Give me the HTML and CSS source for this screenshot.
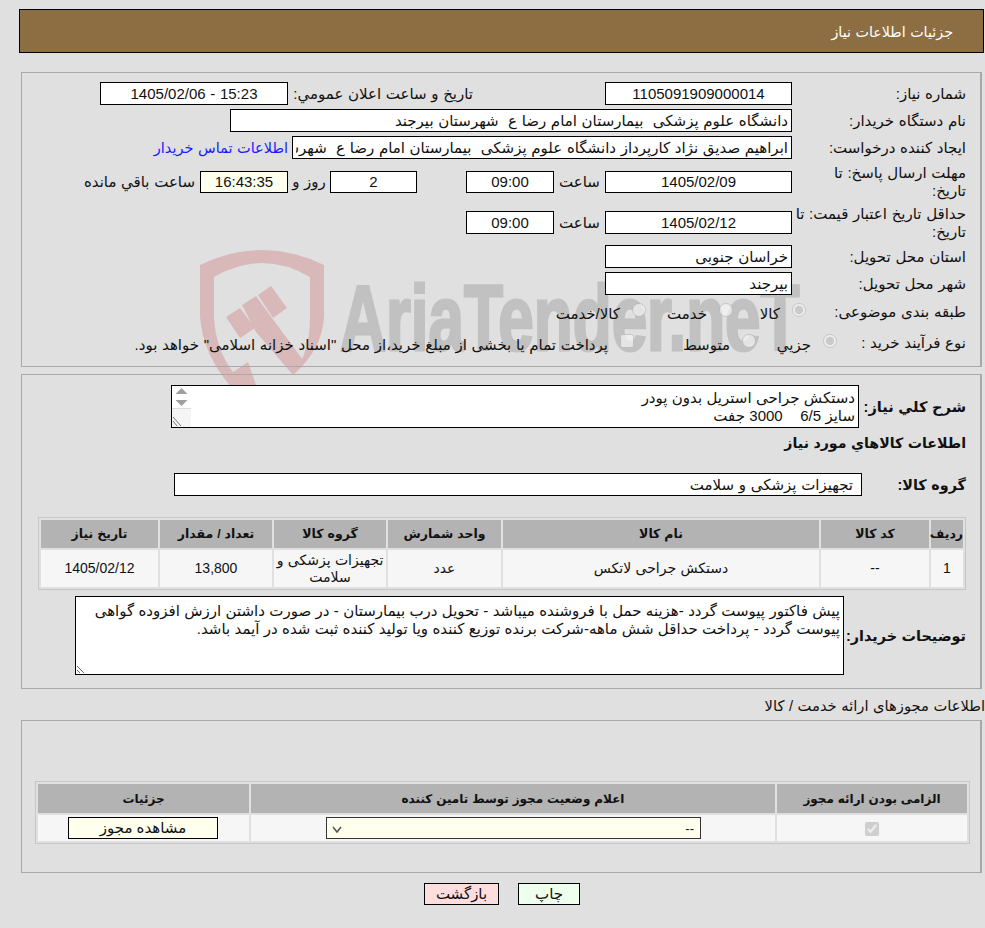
FILE: index.html
```html
<!DOCTYPE html>
<html lang="fa" dir="rtl">
<head>
<meta charset="utf-8">
<title>جزئیات اطلاعات نیاز</title>
<link rel="stylesheet" href="styles.css">
</head>
<body>
<svg class="watermark" width="985" height="420" viewBox="0 0 985 420" aria-hidden="true">
  <path class="wm-red" d="M200 265 Q262 235 324 265 L324 317 Q322 350 293 375 L303 357 Q310 340 310 318 L310 277 Q262 249 214 277 L214 318 Q216 350 233 372 L248 362 L257 388 L232 388 Q203 355 200 317 Z"/>
  <path class="wm-red" d="M226 317 L240 308 L255 328 L240 338 Z M242 305 L256 296 L272 318 L303 360 L293 375 L256 332 Z M258 295 L271 286 L287 308 L273 318 Z"/>
  <text class="wm-text" transform="translate(340 350) scale(.64 1)" textLength="718" lengthAdjust="spacingAndGlyphs">AriaTender.neT</text>
</svg>

<header class="title-bar">جزئیات اطلاعات نیاز</header>

<section class="panel panel-main">
  <div class="row">
    <span class="lbl">شماره نیاز:</span>
    <input class="fld w187 center" readonly value="1105091909000014">
    <span class="lbl-inline announce">تاریخ و ساعت اعلان عمومي:</span>
    <input class="fld w188 center" readonly value="15:23 - 1405/02/06">
  </div>
  <div class="row">
    <span class="lbl">نام دستگاه خریدار:</span>
    <input class="fld w562" readonly value="دانشگاه علوم پزشکی  بیمارستان امام رضا ع  شهرستان بیرجند">
  </div>
  <div class="row">
    <span class="lbl">ایجاد کننده درخواست:</span>
    <input class="fld w500" readonly value="ابراهیم صدیق نژاد کارپرداز دانشگاه علوم پزشکی  بیمارستان امام رضا ع  شهرستان بیرجند">
    <a class="contact" href="#">اطلاعات تماس خریدار</a>
  </div>
  <div class="row tall">
    <span class="lbl lbl-narrow">مهلت ارسال پاسخ: تا تاریخ:</span>
    <input class="fld w187 h22 center" readonly value="1405/02/09">
    <span class="unit">ساعت</span>
    <input class="fld w88 h22 center" readonly value="09:00">
    <span class="spacer49"></span>
    <input class="fld w87 h22 center" readonly value="2">
    <span class="unit-day">روز و</span>
    <input class="fld w88 h22 center cream" readonly value="16:43:35">
    <span class="remain">ساعت باقي مانده</span>
  </div>
  <div class="row tall">
    <span class="lbl">حداقل تاریخ اعتبار قیمت: تا تاریخ:</span>
    <input class="fld w187 center" readonly value="1405/02/12">
    <span class="unit">ساعت</span>
    <input class="fld w88 center" readonly value="09:00">
  </div>
  <div class="row">
    <span class="lbl">استان محل تحویل:</span>
    <input class="fld w187" readonly value="خراسان جنوبی">
  </div>
  <div class="row">
    <span class="lbl">شهر محل تحویل:</span>
    <input class="fld w187" readonly value="بیرجند">
  </div>
  <div class="row h26">
    <span class="lbl lbl-radio1">طبقه بندی موضوعی:</span>
    <label class="opt w73"><input type="radio" name="cat" disabled checked><span>کالا</span></label>
    <label class="opt w87"><input type="radio" name="cat" disabled><span>خدمت</span></label>
    <label class="opt"><input type="radio" name="cat" disabled><span>کالا/خدمت</span></label>
  </div>
  <div class="row h28">
    <span class="lbl lbl-radio2">نوع فرآیند خرید :</span>
    <label class="opt w81"><input type="radio" name="proc" disabled checked><span>جزیي</span></label>
    <label class="opt w122"><input type="radio" name="proc" disabled><span>متوسط</span></label>
    <label class="opt"><input type="checkbox" disabled><span>پرداخت تمام یا بخشی از مبلغ خرید،از محل "اسناد خزانه اسلامی" خواهد بود.</span></label>
  </div>
</section>

<section class="panel panel-items">
  <div class="flow-row">
    <b class="bold-lbl w107">شرح کلي نیاز:</b>
    <div class="area-wrap">
      <textarea class="area area-desc" readonly>دستکش جراحی استریل بدون پودر
سایز 6/5    3000 جفت</textarea>
      <svg class="fake-scroll" width="19" height="41" viewBox="0 0 19 41" aria-hidden="true">
        <rect width="19" height="41" fill="#fff"/>
        <rect y="22" width="19" height="19" fill="#f5f5f5"/>
        <path d="M0 22.5H19" stroke="#dcdcdc"/>
        <path d="M9.5 2L15.5 8H3.5Z M3.5 14H15.5L9.5 20Z" fill="#a0a0a0"/>
        <path d="M1 31L9 40M1 35L5 40" stroke="#777" fill="none"/>
      </svg>
    </div>
  </div>
  <h2 class="items-title">اطلاعات کالاهاي مورد نیاز</h2>
  <div class="flow-row">
    <b class="bold-lbl tight w104">گروه کالا:</b>
    <input class="fld w688 pad-group" readonly value="تجهیزات پزشکی و سلامت">
  </div>
  <table class="grid items">
    <colgroup><col class="c32"><col class="c108"><col class="c316"><col class="c113"><col class="c112"><col class="c112"><col class="c117"></colgroup>
    <thead><tr><th>ردیف</th><th>کد کالا</th><th>نام کالا</th><th>واحد شمارش</th><th>گروه کالا</th><th>تعداد / مقدار</th><th>تاریخ نیاز</th></tr></thead>
    <tbody><tr><td>1</td><td>--</td><td>دستکش جراحی لاتکس</td><td>عدد</td><td>تجهیزات پزشکی و سلامت</td><td>13,800</td><td>1405/02/12</td></tr></tbody>
  </table>
  <div class="flow-row note-row">
    <b class="bold-lbl tight w122">توضیحات خریدار:</b>
    <textarea class="area area-note" readonly>پیش فاکتور پیوست گردد -هزینه حمل با فروشنده میباشد - تحویل درب بیمارستان - در صورت داشتن ارزش افزوده گواهی پیوست گردد - پرداخت حداقل شش ماهه-شرکت برنده توزیع کننده ویا تولید کننده ثبت شده در آیمد باشد.</textarea>
  </div>
</section>

<h3 class="licence-title">اطلاعات مجوزهای ارائه خدمت / کالا</h3>

<section class="panel panel-licence">
  <table class="grid licence">
    <colgroup><col class="c190"><col class="c524"><col class="c211"></colgroup>
    <thead><tr><th>الزامی بودن ارائه مجوز</th><th>اعلام وضعیت مجوز توسط تامین کننده</th><th>جزئیات</th></tr></thead>
    <tbody><tr>
      <td><input type="checkbox" checked disabled></td>
      <td><select class="status"><option>--</option></select></td>
      <td><button class="btn btn-view" type="button">مشاهده مجوز</button></td>
    </tr></tbody>
  </table>
</section>

<div class="actions">
  <button class="btn btn-print" type="button">چاپ</button>
  <button class="btn btn-back" type="button">بازگشت</button>
</div>
</body>
</html>
```
FILE: styles.css
```css
html, body { margin: 0; padding: 0; }
body {
  position: relative;
  width: 985px;
  height: 928px;
  overflow: hidden;
  background: #e0e0e0;
  color: #111;
  font: 15px/18px "Liberation Sans", "DejaVu Sans", sans-serif;
  word-spacing: 0.5px;
  direction: rtl;
}
.watermark { position: absolute; left: 0; top: 0; z-index: -1; }
.wm-red { fill: #d9b8b9; }
.wm-text {
  fill: #c1c1c1;
  stroke: #c1c1c1;
  stroke-width: 3px;
  font: bold 93px "Liberation Sans", sans-serif;
  word-spacing: 0;
  direction: ltr;
  unicode-bidi: bidi-override;
}

.title-bar {
  box-sizing: border-box;
  height: 44px;
  margin: 9px 1px 0 19px;
  padding: 0 30px 0 0;
  border: 1px solid #000;
  background: #8d6e42;
  color: #fff;
  font-size: 14.3px;
  line-height: 44px;
}

.panel {
  box-sizing: border-box;
  margin: 0 3px 0 21px;
  border: 1px solid #a8a8a8;
  border-width: 1px 2px 1px 1px;
}
.panel-main {
  display: flex;
  flex-direction: column;
  gap: 4px;
  height: 295px;
  margin-top: 19px;
  padding: 9px 0 0 0;
}
.row { display: flex; align-items: center; height: 23px; }
.row.tall { height: 37px; }
.row.h26 { height: 26px; }
.row.h28 { height: 28px; }
.lbl {
  box-sizing: border-box;
  flex: none;
  width: 188px;
  padding: 0 14px 0 1px;
}
.lbl-narrow { padding-left: 30px; }
.lbl-radio1 { width: 174px; padding-left: 0; }
.lbl-radio2 { width: 143px; padding-left: 0; }
.lbl-inline { flex: none; }
.announce { width: 185px; margin-right: 132px; }

.fld {
  box-sizing: border-box;
  flex: none;
  height: 23px;
  margin: 0;
  padding: 0 3px;
  border: 1px solid #000;
  border-radius: 0;
  background: #fff;
  color: #111;
  font: 15px "Liberation Sans", "DejaVu Sans", sans-serif;
  word-spacing: 0.5px;
  outline: none;
}
.center { text-align: center; }
.cream { background: #ffffee; }
.h22 { height: 22px; }
.w87 { width: 87px; }
.w88 { width: 88px; }
.w187 { width: 187px; }
.w188 { width: 188px; }
.w500 { width: 500px; }
.w562 { width: 562px; }
.w688 { width: 688px; }
.contact { margin-right: 4px; color: #1a1aff; font-size: 14.5px; text-decoration: none; white-space: nowrap; }
.unit { flex: none; width: 51px; text-align: center; }
.unit-day { flex: none; width: 42px; text-align: center; }
.spacer49 { flex: none; width: 49px; }
.remain { margin-right: 5px; white-space: nowrap; }

.opt { display: flex; flex: none; align-items: center; gap: 12px; white-space: nowrap; }
.opt input { flex: none; width: 14px; height: 14px; margin: 0 0 5px 0; }
.opt span { padding-top: 3px; }
.w73 { width: 73px; }
.w81 { width: 81px; }
.w122 { width: 122px; }

.panel-items { height: 315px; margin-top: 7px; padding: 10px 14px 0 0; }
.flow-row { display: flex; align-items: center; }
.bold-lbl { flex: none; font-size: 14.6px; font-weight: bold; white-space: nowrap; }
.bold-lbl.tight { font-size: 14.4px; }
.w107 { width: 107px; }
.w104 { width: 104px; }
.area-wrap { position: relative; display: flex; flex: none; }
.area {
  box-sizing: border-box;
  flex: none;
  margin: 0;
  padding: 3px 3px 0;
  border: 1px solid #000;
  border-radius: 0;
  background: #fff;
  color: #111;
  font: 15px/18px "Liberation Sans", "DejaVu Sans", sans-serif;
  word-spacing: 0.2px;
  outline: none;
}
.area-desc { width: 688px; height: 43px; overflow: hidden; }
.fake-scroll { position: absolute; left: 1px; top: 1px; pointer-events: none; }
.area-note { width: 769px; height: 79px; overflow: auto; padding: 5px 3px 0; }
.items-title { margin: 6px 0 21px; font-size: 14.2px; line-height: 18px; font-weight: bold; }
.pad-group { padding-right: 8px; }

.grid {
  box-sizing: border-box;
  table-layout: fixed;
  border: 1px solid #c6c6c6;
  border-spacing: 2px;
  border-collapse: separate;
}
.grid th {
  padding: 0;
  background: #b3b3b3;
  font-size: 12.5px;
  font-weight: bold;
  text-align: center;
}
.grid td {
  padding: 0;
  background: #f6f6f6;
  font-size: 14px;
  text-align: center;
  vertical-align: middle;
}
.items { width: 928px; margin: 21px 0 0 0; }
.items th { height: 28px; }
.items td { height: 37px; line-height: 17px; }
.note-row { margin-top: 6px; }
.c32 { width: 32px; }
.c108 { width: 108px; }
.c316 { width: 316px; }
.c113 { width: 113px; }
.c112 { width: 112px; }
.c117 { width: 117px; }
.c190 { width: 190px; }
.c524 { width: 524px; }
.c211 { width: 211px; }

.licence-title {
  margin: 8px 0 5px;
  font-size: 14.7px;
  line-height: 18px;
  font-weight: normal;
}
.panel-licence { height: 153px; padding: 60px 10px 0 0; }
.licence { width: 935px; }
.licence th { height: 29px; font-size: 12px; }
.licence td { height: 26px; }
.licence input { width: 14px; height: 14px; margin: 0; vertical-align: middle; }
.status {
  appearance: none;
  box-sizing: border-box;
  display: block;
  width: 375px;
  height: 22px;
  margin: 0 0 0 75px;
  padding: 0 6px;
  float: left;
  border: 1px solid #333;
  border-radius: 0;
  background: #ffffee url("data:image/svg+xml,%3Csvg xmlns='http://www.w3.org/2000/svg' width='10' height='7'%3E%3Cpath d='M1 1L5 6L9 1' fill='none' stroke='%23555' stroke-width='1.6'/%3E%3C/svg%3E") no-repeat 5px 8px;
  color: #111;
  font: 13px "Liberation Sans", "DejaVu Sans", sans-serif;
}
.btn {
  box-sizing: border-box;
  height: 22px;
  margin: 0;
  padding: 0;
  border: 1px solid #000;
  border-radius: 0;
  color: #111;
  font: 15px "Liberation Sans", "DejaVu Sans", sans-serif;
}
.btn-view { display: block; float: left; width: 150px; margin-left: 30px; background: #ffffee; }
.actions { display: flex; justify-content: center; gap: 19px; margin: 10px 0 0 19px; }
.btn-print { width: 62px; background: #eeffee; }
.btn-back { width: 75px; background: #ffdddd; }
```
